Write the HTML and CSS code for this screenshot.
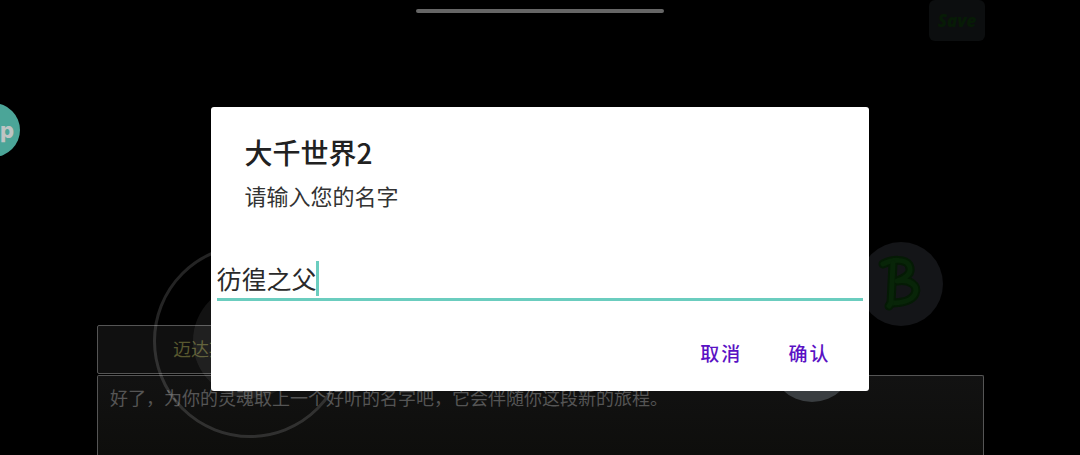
FILE: index.html
```html
<!DOCTYPE html>
<html lang="zh-CN">
<head>
<meta charset="utf-8">
<meta name="viewport" content="width=device-width, initial-scale=1">
<title>大千世界2</title>
<link rel="stylesheet" href="styles.css">
</head>
<body>
<div class="screen">
  <div class="game">
    <section class="story">
      <div class="speaker">迈达斯</div>
      <p class="line">好了，为你的灵魂取上一个好听的名字吧，它会伴随你这段新的旅程。</p>
    </section>
    <div class="joystick"><div class="knob"></div></div>
    <button class="pad pad-a" type="button" aria-label="A"></button>
    <button class="pad pad-b" type="button" aria-label="B">
      <svg viewBox="0 0 84 84" width="84" height="84" fill="none" stroke-linecap="round" stroke-linejoin="round">
        <g stroke="#051a05" stroke-width="9">
          <path d="M24 22C34 17 46 17 50 23C54 31 47 36 38 39C50 37 60 43 56 52C52 60 40 61 32 61"/>
          <path d="M34 21L32 61L30 64"/>
        </g>
        <g stroke="#082508" stroke-width="5">
          <path d="M24 22C34 17 46 17 50 23C54 31 47 36 38 39C50 37 60 43 56 52C52 60 40 61 32 61"/>
          <path d="M34 21L32 61L30 64"/>
        </g>
      </svg>
    </button>
    <button class="save" type="button">Save</button>
    <button class="float-badge" type="button">p</button>
  </div>
  <div class="handle"></div>
  <form class="dialog" role="dialog" aria-labelledby="title">
    <header class="heading">
      <h1 class="title" id="title">大千世界2</h1>
      <label class="message" for="name">请输入您的名字</label>
    </header>
    <div class="field">
      <input class="input" id="name" type="text" value="彷徨之父" autocomplete="off" spellcheck="false">
      <span class="caret"></span>
    </div>
    <footer class="actions">
      <button class="action" type="button">取消</button>
      <button class="action" type="button">确认</button>
    </footer>
  </form>
</div>
</body>
</html>
```
FILE: styles.css
```css
* {
  box-sizing: border-box;
}

body {
  margin: 0;
  background: #000;
  font-family: "Noto Sans CJK SC", "Noto Sans", sans-serif;
}

button {
  padding: 0;
  border: 0;
  background: none;
  font-family: inherit;
}

.screen {
  position: relative;
  display: flex;
  flex-direction: column;
  align-items: center;
  min-height: 100vh;
  padding-top: 9px;
  overflow: hidden;
}

/* Dimmed game scene behind the dialog */
.game {
  position: absolute;
  inset: 0;
  display: flex;
  flex-direction: column;
  justify-content: flex-end;
  padding: 0 96px 0 97px;
}

.story {
  display: flex;
  flex-direction: column;
  gap: 1px;
}

.speaker {
  width: 230px;
  height: 49px;
  padding-left: 75px;
  border: 1px solid #555;
  border-radius: 2px;
  background: #101010;
  color: #58582f;
  font-size: 18px;
  line-height: 45px;
}

.line {
  height: 80px;
  margin: 0;
  padding: 8px 0 0 12px;
  border: 1px solid #555;
  border-bottom: 0;
  border-radius: 2px 2px 0 0;
  background: linear-gradient(#121212, #0e0e0c);
  color: #555;
  font-size: 18px;
  line-height: 26px;
  white-space: nowrap;
}

.joystick {
  position: absolute;
  left: 153px;
  top: 244px;
  display: grid;
  place-items: center;
  width: 194px;
  height: 194px;
  border: 3px solid rgba(255, 255, 255, 0.14);
  border-radius: 50%;
}

.knob {
  width: 114px;
  height: 114px;
  border-radius: 50%;
  background: rgba(255, 255, 255, 0.07);
}

.pad {
  position: absolute;
  width: 84px;
  height: 84px;
  border-radius: 50%;
}

.pad-a {
  left: 770px;
  top: 318px;
  background: #3a3e41;
}

.pad-b {
  left: 859px;
  top: 242px;
  background: #141518;
}

.save {
  position: absolute;
  left: 929px;
  top: 0;
  width: 56px;
  height: 41px;
  border-radius: 6px;
  background: #0c0e0f;
  color: #071b06;
  font-family: "Open Sans", sans-serif;
  font-size: 17px;
  font-style: italic;
  font-weight: 800;
}

.float-badge {
  position: absolute;
  left: -34px;
  top: 103px;
  width: 54px;
  height: 54px;
  padding-right: 6px;
  border-radius: 50%;
  background: #4ba598;
  color: #bfc4c3;
  font-family: Inter, sans-serif;
  font-size: 22px;
  font-weight: 800;
  text-align: right;
}

.handle {
  position: relative;
  width: 248px;
  height: 4px;
  border-radius: 2px;
  background: #666;
}

/* Name entry dialog */
.dialog {
  position: relative;
  width: 61%;
  margin-top: 94px;
  padding-bottom: 20px;
  border-radius: 3px;
  background: #fff;
}

.heading {
  display: flex;
  flex-direction: column;
  padding: 25px 34px 0;
}

.title {
  margin: 0;
  color: #212121;
  font-size: 28px;
  font-weight: 500;
  line-height: 40px;
}

.message {
  color: #333;
  font-size: 22px;
  line-height: 46px;
}

.field {
  position: relative;
  margin: 39px 6px 0;
}

.input {
  display: block;
  width: 100%;
  height: 44px;
  padding: 0;
  border: 0;
  border-bottom: 3px solid #6bcdbf;
  border-radius: 0;
  outline: 0;
  background: none;
  color: #2a2a2a;
  font-family: inherit;
  font-size: 25px;
}

.caret {
  position: absolute;
  left: 99px;
  top: 4px;
  width: 3px;
  height: 35px;
  background: #6bcdbf;
}

.actions {
  display: flex;
  justify-content: flex-end;
  gap: 46px;
  margin-top: 34px;
  padding-right: 39px;
}

.action {
  color: #5a12c4;
  font-size: 19px;
  font-weight: 500;
  letter-spacing: 2px;
  line-height: 36px;
}
```
